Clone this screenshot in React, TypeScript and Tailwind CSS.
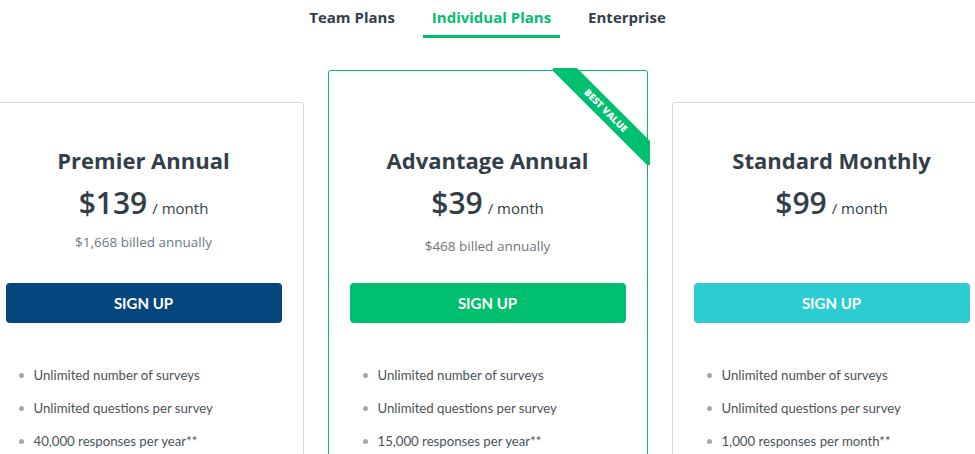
import React from "react";

type Plan = {
  name: string;
  price: string;
  billed?: string;
  btn: string;
  features: string[];
  featured?: boolean;
};

const plans: Plan[] = [
  {
    name: "Premier Annual",
    price: "$139",
    billed: "$1,668 billed annually",
    btn: "bg-[#05467e]",
    features: [
      "Unlimited number of surveys",
      "Unlimited questions per survey",
      "40,000 responses per year**",
    ],
  },
  {
    name: "Advantage Annual",
    price: "$39",
    billed: "$468 billed annually",
    btn: "bg-[#00bf6f]",
    featured: true,
    features: [
      "Unlimited number of surveys",
      "Unlimited questions per survey",
      "15,000 responses per year**",
    ],
  },
  {
    name: "Standard Monthly",
    price: "$99",
    btn: "bg-[#2dccd3]",
    features: [
      "Unlimited number of surveys",
      "Unlimited questions per survey",
      "1,000 responses per month**",
    ],
  },
];

const OPEN = { fontFamily: "'Open Sans', 'Noto Sans', sans-serif" };

function Card({ p }: { p: Plan }) {
  return (
    <div
      className={
        "relative w-[320px] shrink-0 rounded-[3px] bg-white border " +
        (p.featured
          ? "border-[#00bf6f] mt-[70px] pt-[74px] h-[400px]"
          : "border-[#d5d8da] mt-[102px] pt-[42px] h-[400px]")
      }
    >
      {p.featured && (
        <div className="absolute top-[-3px] right-[-3px] w-[97px] h-[97px] overflow-hidden">
          <div className="absolute left-[-22px] top-[33px] w-[150px] h-[19px] rotate-45 bg-[#00bf6f] flex items-center justify-center">
            <span
              className="text-white text-[9.5px] font-extrabold tracking-[0px] leading-none"
              style={OPEN}
            >
              BEST VALUE
            </span>
          </div>
        </div>
      )}
      <div
        className="text-center text-[22px] leading-[30px] font-bold text-[#333e48]"
        style={OPEN}
      >
        {p.name}
      </div>
      <div
        className="mt-[9px] flex items-baseline justify-center text-[#333e48]"
        style={OPEN}
      >
        <span className="text-[30px] leading-[38px] font-semibold">{p.price}</span>
        <span className="ml-[5px] text-[15px]">/ month</span>
      </div>
      <div
        className={
          "text-center text-[13.5px] leading-[18px] text-[#6b787f] " +
          (p.featured ? "mt-[15px] mb-[28px]" : "mt-[11px] mb-[32px]")
        }
        style={OPEN}
      >
        {p.billed ?? "\u00a0"}
      </div>
      <div className="px-[21px]">
        <button
          className={
            "w-full h-[40px] rounded-[4px] text-white text-[15px] font-bold " + p.btn
          }
        >
          SIGN UP
        </button>
      </div>
      <ul className="mt-[43px] pl-[34px] flex flex-col gap-[15px]">
        {p.features.map((f) => (
          <li key={f} className="flex items-center text-[13.2px] leading-[18px] text-[#4a545b]">
            <span className="w-[5px] h-[5px] rounded-full bg-[#a3aaae] mr-[10px]" />
            {f}
          </li>
        ))}
      </ul>
    </div>
  );
}

export default function App() {
  return (
    <div
      className="w-[975px] h-[454px] overflow-hidden bg-white relative"
      style={{ fontFamily: "Lato, 'Noto Sans', sans-serif" }}
    >
      <div className="absolute top-0 left-0 right-0 flex justify-center gap-[19px] pt-[4px]">
        {["Team Plans", "Individual Plans", "Enterprise"].map((t) => (
          <div
            key={t}
            className={
              "px-[9px] h-[34px] flex items-start pt-[2px] text-[15px] font-bold border-b-[3px] " +
              (t === "Individual Plans"
                ? "text-[#00bf6f] border-[#00bf6f]"
                : "text-[#333e48] border-transparent")
            }
            style={OPEN}
          >
            {t}
          </div>
        ))}
      </div>
      <div className="flex justify-center items-start gap-[24px]">
        {plans.map((p) => (
          <Card key={p.name} p={p} />
        ))}
      </div>
    </div>
  );
}
